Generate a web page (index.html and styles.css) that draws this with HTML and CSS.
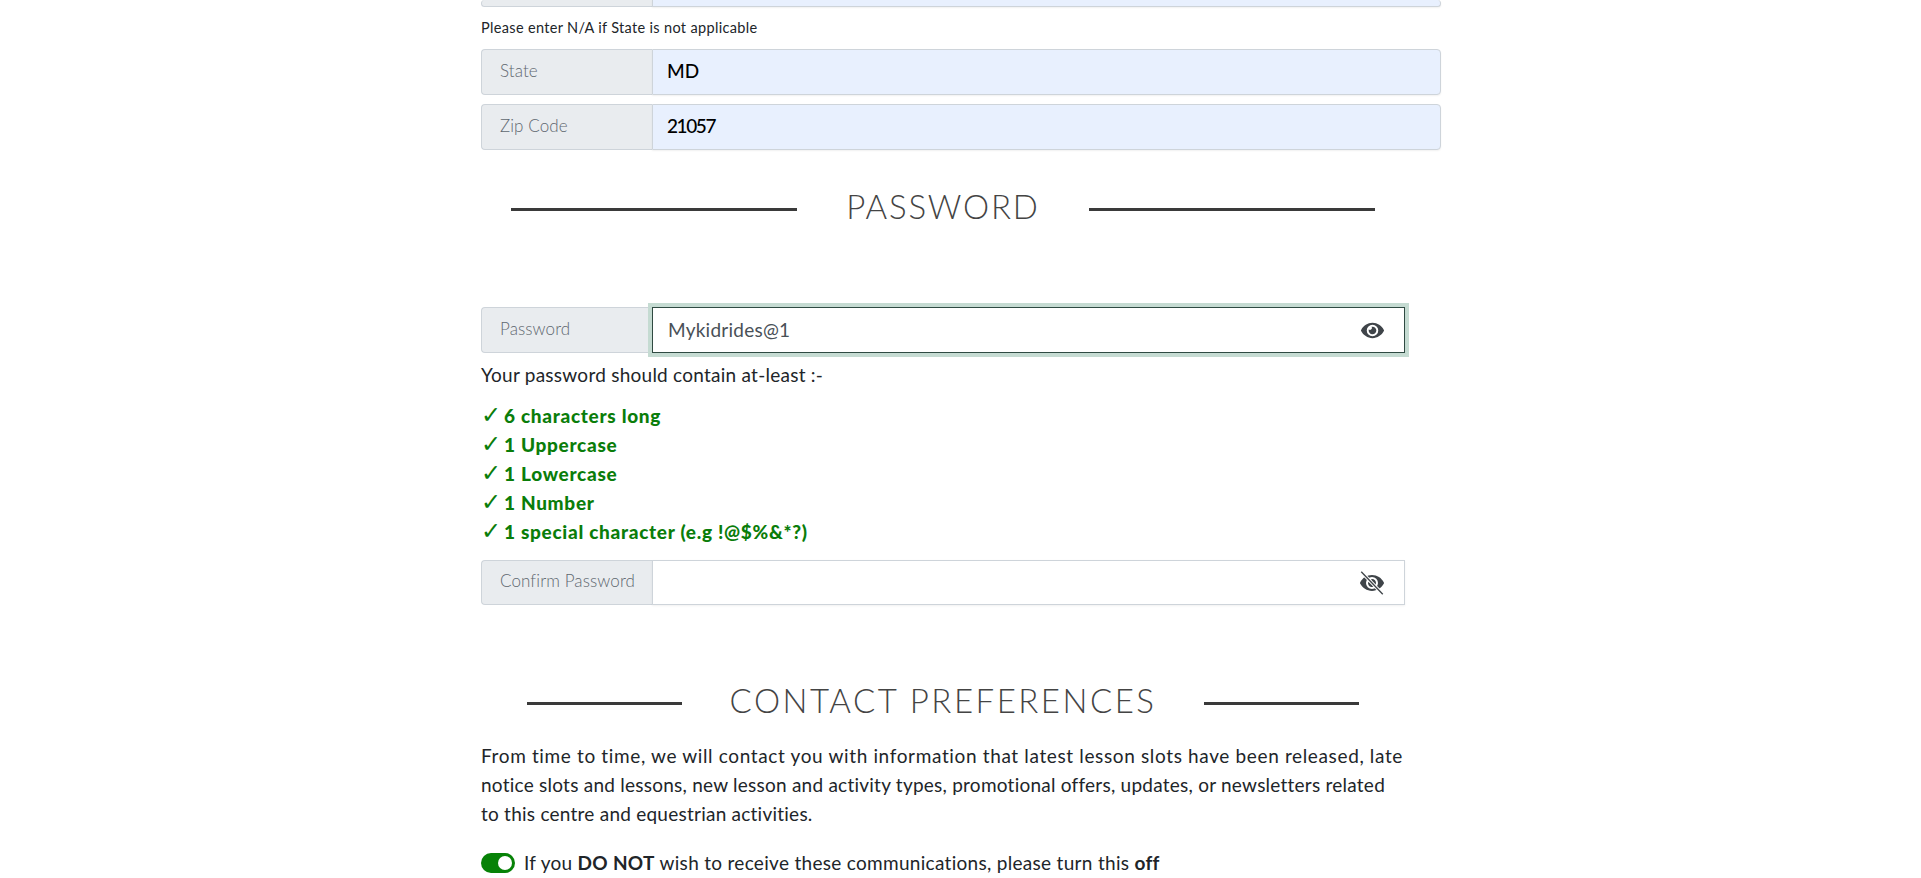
FILE: index.html
```html
<!DOCTYPE html>
<html lang="en">
<head>
    <meta charset="UTF-8">
    <meta name="viewport" content="width=device-width, initial-scale=1.0">
    <title>Register</title>
    <link rel="stylesheet" href="styles.css">
</head>
<body>
    <div class="container">
        <div class="input-group cut-off">
            <div class="group-label"></div>
            <div class="group-input autofilled"></div>
        </div>
        <p class="hint">Please enter N/A if State is not applicable</p>
        <div class="input-group">
            <label class="group-label">State</label>
            <input class="group-input autofilled" type="text" value="MD">
        </div>
        <div class="input-group">
            <label class="group-label">Zip Code</label>
            <input class="group-input autofilled zip" type="text" value="21057">
        </div>

        <div class="narrow">
            <div class="section-title password-title">
                <span class="title-line"></span>
                <h2>PASSWORD</h2>
                <span class="title-line"></span>
            </div>

            <div class="input-group password-group">
                <label class="group-label">Password</label>
                <div class="password-box focused">
                    <input class="password-input" type="text" value="Mykidrides@1">
                    <svg class="eye" viewBox="0 0 576 512"><path d="M572.52 241.4C518.29 135.59 410.93 64 288 64S57.68 135.64 3.48 241.41a32.35 32.35 0 0 0 0 29.19C57.71 376.41 165.07 448 288 448s230.32-71.64 284.52-177.41a32.35 32.35 0 0 0 0-29.19zM288 400a144 144 0 1 1 144-144 143.93 143.93 0 0 1-144 144zm0-240a95.31 95.31 0 0 0-25.31 3.79 47.85 47.85 0 0 1-66.9 66.9A95.78 95.78 0 1 0 288 160z"/></svg>
                </div>
            </div>
            <p class="rules-intro">Your password should contain at-least :-</p>
            <ul class="rules">
                <li><span class="tick">✓</span>6 characters long</li>
                <li><span class="tick">✓</span>1 Uppercase</li>
                <li><span class="tick">✓</span>1 Lowercase</li>
                <li><span class="tick">✓</span>1 Number</li>
                <li><span class="tick">✓</span>1 special character (e.g !@$%&amp;*?)</li>
            </ul>
            <div class="input-group confirm-group">
                <label class="group-label">Confirm Password</label>
                <div class="password-box">
                    <input class="password-input" type="text">
                    <svg class="eye eye-off" viewBox="0 0 576 576">
                        <path transform="translate(0 32)" d="M572.52 241.4C518.29 135.59 410.93 64 288 64S57.68 135.64 3.48 241.41a32.35 32.35 0 0 0 0 29.19C57.71 376.41 165.07 448 288 448s230.32-71.64 284.52-177.41a32.35 32.35 0 0 0 0-29.19zM288 400a144 144 0 1 1 144-144 143.93 143.93 0 0 1-144 144zm0-240a95.31 95.31 0 0 0-25.31 3.79 47.85 47.85 0 0 1-66.9 66.9A95.78 95.78 0 1 0 288 160z"/>
                        <line class="slash-gap" x1="30" y1="20" x2="546" y2="556"/>
                        <line class="slash" x1="30" y1="20" x2="546" y2="556"/>
                    </svg>
                </div>
            </div>

            <div class="section-title contact-title">
                <span class="title-line"></span>
                <h2>CONTACT PREFERENCES</h2>
                <span class="title-line"></span>
            </div>
            <p class="contact-text">
                <span class="line-long">From time to time, we will contact you with information that latest lesson slots have been released, late</span>
                <span class="line-tight">notice slots and lessons, new lesson and activity types, promotional offers, updates, or newsletters related</span>
                <span class="line-tight">to this centre and equestrian activities.</span>
            </p>
            <div class="toggle-row">
                <span class="toggle"><span class="knob"></span></span>
                <span>If you <b>DO NOT</b> wish to receive these communications, please turn this <b>off</b></span>
            </div>
        </div>
    </div>
</body>
</html>
```

FILE: styles.css
```css
html, body {
    height: 878px;
    overflow: hidden;
}
body {
    margin: 0;
    background-color: #ffffff;
    color: #212529;
    font-family: "Lato", "Open Sans", sans-serif;
    font-size: 19px;
}
.container {
    width: 960px;
    margin: 0 auto;
    position: relative;
    left: 0.5px;
}
.narrow {
    width: 924px;
}
.input-group {
    display: flex;
    height: 46px;
    margin-bottom: 9px;
}
.group-label {
    width: 171px;
    box-sizing: border-box;
    padding: 0 0 4px 18px;
    display: flex;
    align-items: center;
    flex: none;
    background-color: #e9ecef;
    border: 1px solid #ced4da;
    border-right: none;
    border-radius: 4px 0 0 4px;
    color: #5f6870;
    font-size: 17px;
    font-weight: 300;
    letter-spacing: 0.1px;
}
.group-input {
    flex: 1;
    min-width: 0;
    box-sizing: border-box;
    padding: 0 14px 3px;
    border: 1px solid #ced4da;
    border-radius: 0 4px 4px 0;
    box-shadow: 0 1px 2px rgba(0, 0, 0, 0.06);
    font-family: inherit;
    font-size: 19px;
    font-weight: 500;
    color: #000000;
    outline: none;
}
.autofilled {
    background-color: #e8f0fe;
}
.zip {
    letter-spacing: -1.4px;
}
.cut-off {
    height: 7px;
    margin-bottom: 0;
}
.cut-off .group-label,
.cut-off .group-input {
    border-top: none;
    padding: 0;
}
.hint {
    margin: 12px 0 13px;
    height: 17px;
    line-height: 17px;
    font-size: 14.5px;
    letter-spacing: 0.33px;
    color: #212529;
}
.section-title {
    display: flex;
    align-items: center;
}
.section-title h2 {
    margin: 0;
    font-size: 33px;
    font-weight: 300;
    line-height: 40px;
    color: #444444;
    letter-spacing: 1.8px;
}
.title-line {
    flex: 1;
    height: 3px;
    background-color: #3a3a3a;
    position: relative;
    top: 3px;
}
.password-title {
    margin-top: 36px;
    padding: 0 30px;
    gap: 49px;
}
.contact-title {
    margin-top: 75px;
    padding: 0 46px;
    gap: 48px;
}
.contact-title h2 {
    letter-spacing: 2.5px;
}
.password-group {
    margin-top: 81px;
    height: 46px;
    margin-bottom: 0;
}
.password-box {
    flex: 1;
    min-width: 0;
    display: flex;
    align-items: center;
    box-sizing: border-box;
    border: 1px solid #ced4da;
    box-shadow: 0 1px 2px rgba(0, 0, 0, 0.06);
    padding-right: 20px;
    position: relative;
}
.password-box.focused {
    border-color: #2f4a42;
    box-shadow: 0 0 0 4px #c5dbd2;
}
.password-input {
    flex: 1;
    min-width: 0;
    border: none;
    outline: none;
    background: transparent;
    padding: 0 15px 2px;
    font-family: inherit;
    font-size: 19px;
    color: #495057;
    letter-spacing: 0.25px;
}
.eye {
    width: 23px;
    height: 21px;
    fill: #3f4449;
    flex: none;
}
.eye-off {
    width: 24px;
    height: 24px;
}
.slash-gap {
    stroke: #ffffff;
    stroke-width: 80;
}
.slash {
    stroke: #3f4449;
    stroke-width: 32;
}
.rules-intro {
    margin: 7px 0 0;
    line-height: 29px;
    letter-spacing: 0.25px;
    color: #212529;
}
.rules {
    list-style: none;
    margin: 12px 0 0;
    padding: 0;
    color: #0a7d0a;
    font-weight: 900;
    line-height: 29px;
    letter-spacing: 0.7px;
}
.rules li {
    display: flex;
}
.tick {
    width: 23px;
    height: 29px;
    flex: none;
    font-family: "DejaVu Sans", sans-serif;
    font-size: 24px;
    line-height: 29px;
    font-weight: 700;
    letter-spacing: 0;
}
.confirm-group {
    margin-top: 14px;
    height: 45px;
    margin-bottom: 0;
}
.contact-text {
    margin: 21px 0 0;
    line-height: 29px;
    white-space: nowrap;
}
.contact-text span {
    display: block;
}
.line-long {
    letter-spacing: 0.64px;
}
.line-tight {
    letter-spacing: 0.24px;
}
.toggle-row {
    display: flex;
    align-items: center;
    gap: 9px;
    margin-top: 23px;
    letter-spacing: 0.3px;
}
.toggle {
    width: 34px;
    height: 20px;
    border-radius: 10px;
    background-color: #078207;
    display: flex;
    align-items: center;
    justify-content: flex-end;
    padding-right: 3px;
    box-sizing: border-box;
    flex: none;
}
.knob {
    width: 14px;
    height: 14px;
    border-radius: 50%;
    background-color: #ffffff;
}
```
